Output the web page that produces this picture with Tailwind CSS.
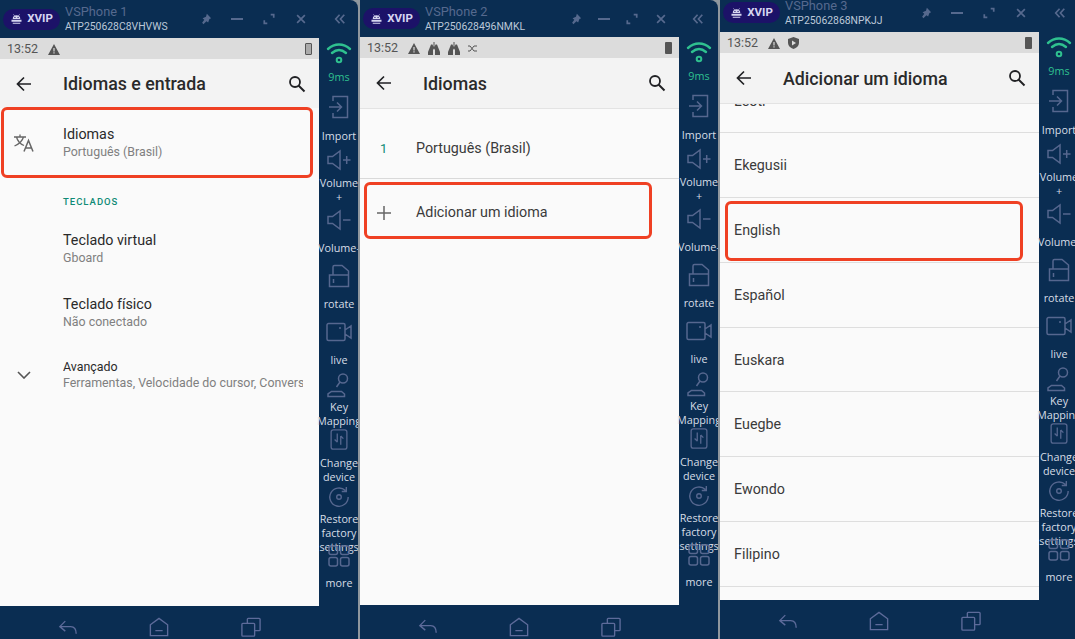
<!DOCTYPE html>
<html lang="en">
<head>
  <meta charset="UTF-8">
  <meta name="viewport" content="width=device-width,initial-scale=1">
  <title>VSPhone</title>
  <script src="https://cdn.jsdelivr.net/npm/@tailwindcss/browser@4"></script>
</head>
<body class="bg-[#8f979e] h-[639px] w-[1075px] overflow-hidden font-['Roboto',sans-serif]">
  <!-- shared icons -->
  <svg class="hidden">
    <symbol id="droid" viewBox="0 0 20 16"><path fill="currentColor" d="M4 8a6 6 0 0 1 12 0zM2 9h16v3.500H2zM4 14h12v1.500H4z"/><path stroke="currentColor" stroke-width="1" d="M5 0.500l2 2.500M15 0.500l-2 2.500"/><circle cx="7.500" cy="5.500" r="1" fill="#1c1268"/><circle cx="12.500" cy="5.500" r="1" fill="#1c1268"/></symbol>
    <symbol id="pin" viewBox="0 0 14 14"><path fill="currentColor" d="M8 1l5 5-2 1-1.500 4-2-1.500L4 13l-1.500-1.500L5 8 3 6l4-1.500z"/></symbol>
    <symbol id="full" viewBox="0 0 14 14"><path fill="none" stroke="currentColor" stroke-width="2" d="M9 2h3.500v3.500M5 12H1.500V8.500"/></symbol>
    <symbol id="close" viewBox="0 0 14 14"><path fill="none" stroke="currentColor" stroke-width="2" d="M2.500 2.500l9 9M11.500 2.500l-9 9"/></symbol>
    <symbol id="dbl" viewBox="0 0 14 14"><path fill="none" stroke="currentColor" stroke-width="2" d="M6.500 2L2 7l4.500 5M12 2L7.500 7l4.500 5"/></symbol>
    <symbol id="back" viewBox="0 0 18 18"><path fill="none" stroke="currentColor" stroke-width="1.700" d="M16 9H2.500M9 2.500L2.500 9 9 15.500"/></symbol>
    <symbol id="search" viewBox="0 0 18 18"><circle cx="7" cy="7" r="5" fill="none" stroke="currentColor" stroke-width="1.800"/><path stroke="currentColor" stroke-width="2" d="M10.500 10.500l6 6"/></symbol>
    <symbol id="warn" viewBox="0 0 12 11"><path fill="currentColor" fill-rule="evenodd" d="M6 0l6 11H0zM5.400 4v3.500h1.200V4zM5.400 8.300v1.200h1.200V8.300z"/></symbol>
    <symbol id="lung" viewBox="0 0 12 13"><path fill="currentColor" d="M5.500 0h1v5l1-2.500h1.500L12 10v3H7V8L6 6.500 5 8v5H0v-3L3 2.500h1.500l1 2.500z"/></symbol>
    <symbol id="wifi" viewBox="0 0 26 24"><g fill="none" stroke="#2fc08f" stroke-width="2.400" stroke-linecap="round"><path d="M2 8c6.500-6 15.500-6 22 0"/><path d="M6 12c4.500-4 9.500-4 14 0"/></g><circle cx="13" cy="19" r="2.300" fill="none" stroke="#2fc08f" stroke-width="2"/></symbol>
    <symbol id="import" viewBox="0 0 20 24"><path fill="none" stroke="currentColor" stroke-width="1.500" d="M4 6V1.500h14.500v21H4V18M0 12h12M8 7.500l4.500 4.500L8 16.500"/></symbol>
    <symbol id="volp" viewBox="0 0 24 22"><path fill="none" stroke="currentColor" stroke-width="1.500" d="M1 7.500h4.500L13 2v18l-7.500-5.500H1zM16 11h7.500M19.700 7v8"/></symbol>
    <symbol id="volm" viewBox="0 0 24 22"><path fill="none" stroke="currentColor" stroke-width="1.500" d="M1 7.500h4.500L13 2v18l-7.500-5.500H1zM16 11h7.500"/></symbol>
    <symbol id="rotate" viewBox="0 0 22 24"><path fill="none" stroke="currentColor" stroke-width="1.500" d="M1.500 11h19v11.500h-19zM5 11V3a1.500 1.500 0 0 1 1.500-1.500H14L20.500 7v4M5.500 15v4"/></symbol>
    <symbol id="live" viewBox="0 0 26 20"><path fill="none" stroke="currentColor" stroke-width="1.500" d="M2.500 1.500h15a1.500 1.500 0 0 1 1.500 1.500v14a1.500 1.500 0 0 1-1.500 1.500h-15A1.500 1.500 0 0 1 1 17V3a1.500 1.500 0 0 1 1.500-1.500zM19 8l6-4v12l-6-4"/><circle cx="14" cy="6" r="1" fill="currentColor"/></symbol>
    <symbol id="key" viewBox="0 0 24 26"><g fill="none" stroke="currentColor" stroke-width="1.500"><circle cx="16" cy="6.500" r="4.500"/><path d="M13 10L9.500 15M4.500 19.500h10l3 2.500V24.500H1V22z"/></g></symbol>
    <symbol id="change" viewBox="0 0 20 24"><rect x="1" y="1" width="18" height="22" rx="2.500" fill="none" stroke="currentColor" stroke-width="1.500"/><path fill="none" stroke="currentColor" stroke-width="1.500" d="M8 5v10M5 12l3 3M12 18V8M12 8l3 3"/></symbol>
    <symbol id="restore" viewBox="0 0 24 24"><path fill="none" stroke="currentColor" stroke-width="1.500" d="M19 5A10 10 0 1 0 22 12M20 1v5h-5"/><circle cx="12" cy="12" r="2.500" fill="none" stroke="currentColor" stroke-width="1.500"/></symbol>
    <symbol id="more" viewBox="0 0 22 22"><g fill="none" stroke="currentColor" stroke-width="1.500"><rect x="1" y="1" width="8.500" height="8.500" rx="2"/><rect x="12.500" y="1" width="8.500" height="8.500" rx="2"/><rect x="1" y="12.500" width="8.500" height="8.500" rx="2"/><rect x="12.500" y="12.500" width="8.500" height="8.500" rx="2"/></g></symbol>
    <symbol id="nback" viewBox="0 0 22 18"><path fill="none" stroke="currentColor" stroke-width="1.500" d="M8 2L2 8l6 5M2 8h12c4 0 6 3 6 8"/></symbol>
    <symbol id="nhome" viewBox="0 0 22 22"><path fill="none" stroke="currentColor" stroke-width="1.500" d="M1.500 8.500L11 1.500l9.500 7V20.500h-19zM7 15h8"/></symbol>
    <symbol id="ncopy" viewBox="0 0 22 22"><path fill="none" stroke="currentColor" stroke-width="1.500" d="M7 7V2.500A1 1 0 0 1 8 1.500h12a1 1 0 0 1 1 1V14a1 1 0 0 1-1 1h-5M2 7h12a1 1 0 0 1 1 1v12a1 1 0 0 1-1 1H2a1 1 0 0 1-1-1V8a1 1 0 0 1 1-1z"/></symbol>
  </svg>

  <div class="flex h-full">
    <!-- window 1 -->
    <section class="relative w-[358px] h-full mr-[2px] shrink-0 flex flex-col bg-[#0a2d52] rounded-tr-lg overflow-hidden">
      <header class="h-[38px] shrink-0 flex items-center text-[#56698e]">
        <div class="ml-[3px] w-[57px] h-[21px] rounded-full bg-[#1c1268] flex items-center justify-center gap-[4px] text-[#d6d6f0] text-[11.500px] font-bold">
          <svg class="w-[13px] h-[10px]"><use href="#droid"/></svg>XVIP
        </div>
        <div class="ml-[5px] w-[128px] text-[#bcc8d8]">
          <div class="text-[12.800px] leading-[14px] text-[#56698e]">VSPhone 1</div>
          <div class="text-[10.400px] leading-[13px] mt-[1px] whitespace-nowrap">ATP250628C8VHVWS</div>
        </div>
        <svg class="w-[12px] h-[12px] ml-[7px]"><use href="#pin"/></svg>
        <div class="w-[12px] h-[2px] bg-current ml-[19px]"></div>
        <svg class="w-[12px] h-[12px] ml-[20px]"><use href="#full"/></svg>
        <svg class="w-[12px] h-[12px] ml-[20px]"><use href="#close"/></svg>
        <svg class="w-[12px] h-[12px] ml-[27px]"><use href="#dbl"/></svg>
      </header>
      <div class="flex flex-1 min-h-0">
        <main class="w-[319px] shrink-0 bg-[#fafafa] flex flex-col">
          <div class="h-[21px] bg-[#dcdcdc] flex items-center pl-[7px] pr-[7px] pt-[1px] text-[#555] text-[12.500px]">
            13:52
            <svg class="w-[12px] h-[11px] ml-[10px]"><use href="#warn"/></svg>
            <div class="ml-auto w-[7px] h-[12px] rounded-[1px] border border-[#555] bg-[#aaa]"></div>
          </div>
          <div class="h-[49px] bg-[#f3f3f3] flex items-center text-[#202124]">
            <svg class="w-[18px] h-[18px] ml-[15px]"><use href="#back"/></svg>
            <h1 class="ml-[30px] pt-[2px] text-[17.800px] font-medium text-[#2a2a2a]">Idiomas e entrada</h1>
            <svg class="w-[18px] h-[18px] ml-auto mr-[13px]"><use href="#search"/></svg>
          </div>
          <div class="h-[71px] flex items-center pb-[2px]">
            <svg class="w-[20px] h-[18px] ml-[14px] text-[#666]" viewBox="0 0 20 18"><path fill="none" stroke="currentColor" stroke-width="1.300" d="M0 3h12M6 0.500V3M2.500 3c1 4 4 7 7.500 8.500M9.500 3C8.500 6.500 5 10 0.500 12"/><path fill="none" stroke="currentColor" stroke-width="1.500" d="M10 17.500L14.500 6.500l4.500 11M11.500 14h6"/></svg>
            <div class="ml-[29px]">
              <div class="text-[14.300px] leading-[18px] text-[#2a2a2a]">Idiomas</div>
              <div class="text-[12.400px] leading-[18px] text-[#808080]">Português (Brasil)</div>
            </div>
          </div>
          <div class="pl-[63px] pt-[16px] h-[37px] text-[9.500px] font-medium tracking-[1px] text-[#0f8a76]">TECLADOS</div>
          <div class="h-[64px] pl-[63px] pt-[2px] flex flex-col justify-center">
            <div class="text-[14.300px] leading-[18px] text-[#2a2a2a]">Teclado virtual</div>
            <div class="text-[12.400px] leading-[18px] text-[#808080]">Gboard</div>
          </div>
          <div class="h-[64px] pl-[63px] pt-[2px] flex flex-col justify-center">
            <div class="text-[14.300px] leading-[18px] text-[#2a2a2a]">Teclado físico</div>
            <div class="text-[12.400px] leading-[18px] text-[#808080]">Não conectado</div>
          </div>
          <div class="h-[64px] flex items-center pb-[2px]">
            <svg class="w-[14px] h-[8px] ml-[17px] text-[#555]" viewBox="0 0 14 8"><path fill="none" stroke="currentColor" stroke-width="1.600" d="M1 1l6 6 6-6"/></svg>
            <div class="ml-[32px] w-[240px] overflow-hidden whitespace-nowrap">
              <div class="text-[12.400px] leading-[16px] text-[#2a2a2a]">Avançado</div>
              <div class="text-[12.400px] leading-[16px] text-[#808080]">Ferramentas, Velocidade do cursor, Conversão</div>
            </div>
          </div>
        </main>
        <aside class="flex-1 min-w-0 pl-[1px] flex flex-col items-center text-[10.800px] leading-[14px] text-center font-['Open_Sans',sans-serif] text-[#d7dde6]">
          <svg class="w-[26px] h-[24px] mt-[3px] shrink-0"><use href="#wifi"/></svg>
          <div class="h-[25px] mt-[5px] text-[#2fc08f] shrink-0">9ms</div>
          <div class="h-[54px] shrink-0 flex flex-col items-center text-[#56678f]"><svg class="w-[20px] h-[24px] shrink-0"><use href="#import"/></svg><span class="mt-[10px] text-[#d7dde6]">Import</span></div>
          <div class="h-[60px] shrink-0 flex flex-col items-center text-[#56678f]"><svg class="w-[24px] h-[22px] shrink-0"><use href="#volp"/></svg><span class="mt-[5px] text-[#d7dde6]">Volume<br>+</span></div>
          <div class="h-[55px] shrink-0 flex flex-col items-center text-[#56678f]"><svg class="w-[24px] h-[22px] shrink-0"><use href="#volm"/></svg><span class="mt-[10px] text-[#d7dde6] whitespace-nowrap">Volume-</span></div>
          <div class="h-[58px] shrink-0 flex flex-col items-center text-[#56678f]"><svg class="w-[22px] h-[24px] shrink-0"><use href="#rotate"/></svg><span class="mt-[9px] text-[#d7dde6]">rotate</span></div>
          <div class="h-[50px] shrink-0 flex flex-col items-center text-[#56678f]"><svg class="w-[26px] h-[20px] shrink-0"><use href="#live"/></svg><span class="mt-[11px] text-[#d7dde6]">live</span></div>
          <div class="h-[57px] shrink-0 flex flex-col items-center text-[#56678f]"><svg class="w-[24px] h-[26px] shrink-0"><use href="#key"/></svg><span class="mt-[2px] text-[#d7dde6]">Key<br>Mapping</span></div>
          <div class="h-[57px] shrink-0 flex flex-col items-center text-[#56678f]"><svg class="w-[18px] h-[21px] shrink-0"><use href="#change"/></svg><span class="mt-[6px] text-[#d7dde6]">Change<br>device</span></div>
          <div class="h-[59px] shrink-0 flex flex-col items-center text-[#56678f]"><svg class="w-[22px] h-[22px] shrink-0"><use href="#restore"/></svg><span class="mt-[4px] text-[#d7dde6]">Restore<br>factory<br>settings</span></div>
          <div class="shrink-0 flex flex-col items-center text-[#56678f]"><svg class="w-[22px] h-[22px] shrink-0"><use href="#more"/></svg><span class="mt-[9px] text-[#d7dde6]">more</span></div>
        </aside>
      </div>
      <nav class="h-[33px] shrink-0 flex items-center text-[#5d6b9a]">
        <svg class="w-[20px] h-[17px] ml-[58px] mt-[9px]"><use href="#nback"/></svg>
        <svg class="w-[20px] h-[20px] ml-[71px] mt-[9px]"><use href="#nhome"/></svg>
        <svg class="w-[20px] h-[20px] ml-[72px] mt-[9px]"><use href="#ncopy"/></svg>
      </nav>
      <div class="absolute left-[1px] top-[107px] w-[312px] h-[71px] border-[3px] border-[#ef4023] rounded-[6px]"></div>
    </section>

    <!-- window 2 -->
    <section class="relative w-[358px] h-full mr-[2px] shrink-0 flex flex-col bg-[#0a2d52] rounded-tr-lg overflow-hidden">
      <header class="h-[37px] shrink-0 flex items-center text-[#56698e]">
        <div class="ml-[3px] w-[57px] h-[21px] rounded-full bg-[#1c1268] flex items-center justify-center gap-[4px] text-[#d6d6f0] text-[11.500px] font-bold">
          <svg class="w-[13px] h-[10px]"><use href="#droid"/></svg>XVIP
        </div>
        <div class="ml-[5px] w-[137px] text-[#bcc8d8]">
          <div class="text-[12.800px] leading-[14px] text-[#56698e]">VSPhone 2</div>
          <div class="text-[10.400px] leading-[13px] mt-[1px] whitespace-nowrap">ATP250628496NMKL</div>
        </div>
        <svg class="w-[12px] h-[12px] ml-[8px]"><use href="#pin"/></svg>
        <div class="w-[12px] h-[2px] bg-current ml-[16px]"></div>
        <svg class="w-[12px] h-[12px] ml-[16px]"><use href="#full"/></svg>
        <svg class="w-[12px] h-[12px] ml-[17px]"><use href="#close"/></svg>
        <svg class="w-[12px] h-[12px] ml-[25px]"><use href="#dbl"/></svg>
      </header>
      <div class="flex flex-1 min-h-0">
        <main class="w-[319px] shrink-0 bg-[#fafafa] flex flex-col">
          <div class="h-[21px] bg-[#dcdcdc] flex items-center pl-[7px] pr-[7px] pt-[1px] text-[#555] text-[12.500px]">
            13:52
            <svg class="w-[12px] h-[11px] ml-[10px]"><use href="#warn"/></svg>
            <svg class="w-[12px] h-[13px] ml-[8px]"><use href="#lung"/></svg>
            <svg class="w-[12px] h-[13px] ml-[8px]"><use href="#lung"/></svg>
            <svg class="w-[10px] h-[9px] ml-[8px]" viewBox="0 0 10 9"><path fill="none" stroke="currentColor" d="M0 2h2l4 5h3M0 7h2l4-5h3"/></svg>
            <div class="ml-auto w-[7px] h-[12px] rounded-[1px] bg-[#555]"></div>
          </div>
          <div class="h-[51px] bg-[#f3f3f3] flex items-center text-[#202124] border-b border-[#e3e3e3]">
            <svg class="w-[18px] h-[18px] ml-[15px]"><use href="#back"/></svg>
            <h1 class="ml-[30px] pt-[2px] text-[17.800px] font-medium text-[#2a2a2a]">Idiomas</h1>
            <svg class="w-[18px] h-[18px] ml-auto mr-[13px]"><use href="#search"/></svg>
          </div>
          <div class="h-[70px] flex items-center pt-[10px] border-b border-[#d9d9d9]">
            <span class="ml-[20px] w-[36px] text-[13px] text-[#0f8a76]">1</span>
            <span class="text-[14.300px] text-[#3a3a3a]">Português (Brasil)</span>
          </div>
          <div class="h-[64px] flex items-center pt-[4px]">
            <svg class="w-[14px] h-[14px] ml-[17px] text-[#666]" viewBox="0 0 14 14"><path stroke="currentColor" stroke-width="1.500" d="M0 7h14M7 0v14"/></svg>
            <span class="ml-[25px] text-[14.300px] text-[#3a3a3a]">Adicionar um idioma</span>
          </div>
        </main>
        <aside class="flex-1 min-w-0 pl-[1px] flex flex-col items-center text-[10.800px] leading-[14px] text-center font-['Open_Sans',sans-serif] text-[#d7dde6]">
          <svg class="w-[26px] h-[24px] mt-[3px] shrink-0"><use href="#wifi"/></svg>
          <div class="h-[25px] mt-[5px] text-[#2fc08f] shrink-0">9ms</div>
          <div class="h-[54px] shrink-0 flex flex-col items-center text-[#56678f]"><svg class="w-[20px] h-[24px] shrink-0"><use href="#import"/></svg><span class="mt-[10px] text-[#d7dde6]">Import</span></div>
          <div class="h-[60px] shrink-0 flex flex-col items-center text-[#56678f]"><svg class="w-[24px] h-[22px] shrink-0"><use href="#volp"/></svg><span class="mt-[5px] text-[#d7dde6]">Volume<br>+</span></div>
          <div class="h-[55px] shrink-0 flex flex-col items-center text-[#56678f]"><svg class="w-[24px] h-[22px] shrink-0"><use href="#volm"/></svg><span class="mt-[10px] text-[#d7dde6] whitespace-nowrap">Volume-</span></div>
          <div class="h-[58px] shrink-0 flex flex-col items-center text-[#56678f]"><svg class="w-[22px] h-[24px] shrink-0"><use href="#rotate"/></svg><span class="mt-[9px] text-[#d7dde6]">rotate</span></div>
          <div class="h-[50px] shrink-0 flex flex-col items-center text-[#56678f]"><svg class="w-[26px] h-[20px] shrink-0"><use href="#live"/></svg><span class="mt-[11px] text-[#d7dde6]">live</span></div>
          <div class="h-[57px] shrink-0 flex flex-col items-center text-[#56678f]"><svg class="w-[24px] h-[26px] shrink-0"><use href="#key"/></svg><span class="mt-[2px] text-[#d7dde6]">Key<br>Mapping</span></div>
          <div class="h-[57px] shrink-0 flex flex-col items-center text-[#56678f]"><svg class="w-[18px] h-[21px] shrink-0"><use href="#change"/></svg><span class="mt-[6px] text-[#d7dde6]">Change<br>device</span></div>
          <div class="h-[59px] shrink-0 flex flex-col items-center text-[#56678f]"><svg class="w-[22px] h-[22px] shrink-0"><use href="#restore"/></svg><span class="mt-[4px] text-[#d7dde6]">Restore<br>factory<br>settings</span></div>
          <div class="shrink-0 flex flex-col items-center text-[#56678f]"><svg class="w-[22px] h-[22px] shrink-0"><use href="#more"/></svg><span class="mt-[9px] text-[#d7dde6]">more</span></div>
        </aside>
      </div>
      <nav class="h-[34px] shrink-0 flex items-center text-[#5d6b9a]">
        <svg class="w-[20px] h-[17px] ml-[58px] mt-[9px]"><use href="#nback"/></svg>
        <svg class="w-[20px] h-[20px] ml-[71px] mt-[9px]"><use href="#nhome"/></svg>
        <svg class="w-[20px] h-[20px] ml-[72px] mt-[9px]"><use href="#ncopy"/></svg>
      </nav>
      <div class="absolute left-[4px] top-[182px] w-[288px] h-[57px] border-[3px] border-[#ef4023] rounded-[6px]"></div>
    </section>

    <!-- window 3 -->
    <section class="relative w-[355px] h-full shrink-0 flex flex-col bg-[#0a2d52] overflow-hidden">
      <header class="h-[32px] shrink-0 flex items-start text-[#56698e]">
        <div class="ml-[3px] mt-[2px] w-[57px] h-[21px] rounded-full bg-[#1c1268] flex items-center justify-center gap-[4px] text-[#d6d6f0] text-[11.500px] font-bold">
          <svg class="w-[13px] h-[10px]"><use href="#droid"/></svg>XVIP
        </div>
        <div class="ml-[5px] w-[128px] -mt-[1px] text-[#bcc8d8]">
          <div class="text-[12.800px] leading-[14px] text-[#56698e]">VSPhone 3</div>
          <div class="text-[10.400px] leading-[13px] mt-[1px] whitespace-nowrap">ATP25062868NPKJJ</div>
        </div>
        <svg class="w-[12px] h-[12px] ml-[7px] mt-[7px]"><use href="#pin"/></svg>
        <div class="w-[12px] h-[2px] bg-current ml-[19px] mt-[12px]"></div>
        <svg class="w-[12px] h-[12px] ml-[20px] mt-[7px]"><use href="#full"/></svg>
        <svg class="w-[12px] h-[12px] ml-[20px] mt-[7px]"><use href="#close"/></svg>
        <svg class="w-[12px] h-[12px] ml-[27px] mt-[7px]"><use href="#dbl"/></svg>
      </header>
      <div class="flex flex-1 min-h-0">
        <main class="w-[319px] shrink-0 bg-[#fafafa] flex flex-col overflow-hidden">
          <div class="h-[21px] shrink-0 bg-[#dcdcdc] flex items-center pl-[7px] pr-[7px] pt-[1px] text-[#555] text-[12.500px]">
            13:52
            <svg class="w-[12px] h-[11px] ml-[10px]"><use href="#warn"/></svg>
            <svg class="w-[11px] h-[12px] ml-[8px]" viewBox="0 0 11 12"><path fill="currentColor" fill-rule="evenodd" d="M5.500 0L11 2v4c0 3-2.500 5-5.500 6C2.500 11 0 9 0 6V2zM4 3.500v5l4-2.500z"/></svg>
            <div class="ml-auto w-[7px] h-[12px] rounded-[1px] bg-[#555]"></div>
          </div>
          <div class="h-[51px] shrink-0 bg-[#f3f3f3] flex items-center text-[#202124] border-b border-[#e3e3e3]">
            <svg class="w-[18px] h-[18px] ml-[15px]"><use href="#back"/></svg>
            <h1 class="ml-[30px] pt-[2px] text-[17.800px] font-medium text-[#2a2a2a]">Adicionar um idioma</h1>
            <svg class="w-[18px] h-[18px] ml-auto mr-[13px]"><use href="#search"/></svg>
          </div>
          <div class="h-[29px] shrink-0 overflow-hidden border-b border-[#dedede] pl-[14px] text-[14.300px] text-[#3a3a3a]"><div class="-mt-[13px]">Leotí</div></div>
          <div class="h-[65px] shrink-0 flex items-center pt-[2px] border-b border-[#dedede] pl-[14px] text-[14.300px] text-[#3a3a3a]">Ekegusii</div>
          <div class="h-[65px] shrink-0 flex items-center pt-[2px] border-b border-[#dedede] pl-[14px] text-[14.300px] text-[#3a3a3a]">English</div>
          <div class="h-[65px] shrink-0 flex items-center pt-[2px] border-b border-[#dedede] pl-[14px] text-[14.300px] text-[#3a3a3a]">Español</div>
          <div class="h-[64px] shrink-0 flex items-center pt-[2px] border-b border-[#dedede] pl-[14px] text-[14.300px] text-[#3a3a3a]">Euskara</div>
          <div class="h-[65px] shrink-0 flex items-center pt-[2px] border-b border-[#dedede] pl-[14px] text-[14.300px] text-[#3a3a3a]">Euegbe</div>
          <div class="h-[65px] shrink-0 flex items-center pt-[2px] border-b border-[#dedede] pl-[14px] text-[14.300px] text-[#3a3a3a]">Ewondo</div>
          <div class="h-[65px] shrink-0 flex items-center pt-[2px] border-b border-[#dedede] pl-[14px] text-[14.300px] text-[#3a3a3a]">Filipino</div>
        </main>
        <aside class="w-[40px] shrink-0 flex flex-col items-center text-[10.800px] leading-[14px] text-center font-['Open_Sans',sans-serif] text-[#d7dde6]">
          <svg class="w-[26px] h-[24px] mt-[3px] shrink-0"><use href="#wifi"/></svg>
          <div class="h-[25px] mt-[5px] text-[#2fc08f] shrink-0">9ms</div>
          <div class="h-[54px] shrink-0 flex flex-col items-center text-[#56678f]"><svg class="w-[20px] h-[24px] shrink-0"><use href="#import"/></svg><span class="mt-[10px] text-[#d7dde6]">Import</span></div>
          <div class="h-[60px] shrink-0 flex flex-col items-center text-[#56678f]"><svg class="w-[24px] h-[22px] shrink-0"><use href="#volp"/></svg><span class="mt-[5px] text-[#d7dde6]">Volume<br>+</span></div>
          <div class="h-[55px] shrink-0 flex flex-col items-center text-[#56678f]"><svg class="w-[24px] h-[22px] shrink-0"><use href="#volm"/></svg><span class="mt-[10px] text-[#d7dde6] whitespace-nowrap">Volume-</span></div>
          <div class="h-[58px] shrink-0 flex flex-col items-center text-[#56678f]"><svg class="w-[22px] h-[24px] shrink-0"><use href="#rotate"/></svg><span class="mt-[9px] text-[#d7dde6]">rotate</span></div>
          <div class="h-[50px] shrink-0 flex flex-col items-center text-[#56678f]"><svg class="w-[26px] h-[20px] shrink-0"><use href="#live"/></svg><span class="mt-[11px] text-[#d7dde6]">live</span></div>
          <div class="h-[57px] shrink-0 flex flex-col items-center text-[#56678f]"><svg class="w-[24px] h-[26px] shrink-0"><use href="#key"/></svg><span class="mt-[2px] text-[#d7dde6]">Key<br>Mapping</span></div>
          <div class="h-[57px] shrink-0 flex flex-col items-center text-[#56678f]"><svg class="w-[18px] h-[21px] shrink-0"><use href="#change"/></svg><span class="mt-[6px] text-[#d7dde6]">Change<br>device</span></div>
          <div class="h-[59px] shrink-0 flex flex-col items-center text-[#56678f]"><svg class="w-[22px] h-[22px] shrink-0"><use href="#restore"/></svg><span class="mt-[4px] text-[#d7dde6]">Restore<br>factory<br>settings</span></div>
          <div class="shrink-0 flex flex-col items-center text-[#56678f]"><svg class="w-[22px] h-[22px] shrink-0"><use href="#more"/></svg><span class="mt-[9px] text-[#d7dde6]">more</span></div>
        </aside>
      </div>
      <nav class="h-[39px] shrink-0 flex items-center text-[#5d6b9a]">
        <svg class="w-[20px] h-[17px] ml-[58px] mt-[3px]"><use href="#nback"/></svg>
        <svg class="w-[20px] h-[20px] ml-[71px] mt-[3px]"><use href="#nhome"/></svg>
        <svg class="w-[20px] h-[20px] ml-[72px] mt-[3px]"><use href="#ncopy"/></svg>
      </nav>
      <div class="absolute left-[5px] top-[201px] w-[298px] h-[60px] border-[3px] border-[#ef4023] rounded-[6px]"></div>
    </section>
  </div>
</body>
</html>
